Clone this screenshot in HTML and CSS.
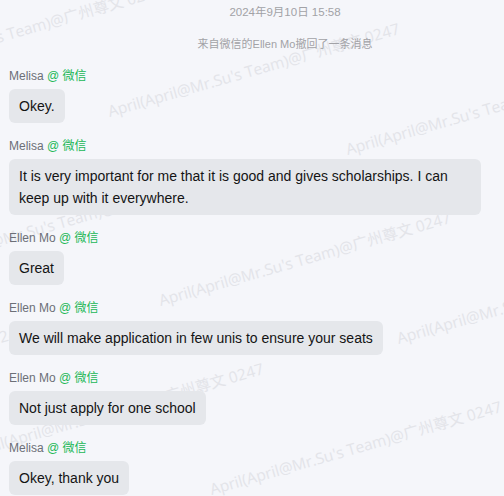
FILE: index.html
```html
<!DOCTYPE html>
<html lang="zh-CN">
<head>
<meta charset="utf-8">
<title>Chat</title>
<link rel="stylesheet" href="styles.css">
</head>
<body>
<div class="watermarks" aria-hidden="true">
  <span class="wm wm-a">April(April@Mr.Su's Team)@广州尊文 0247</span>
  <span class="wm wm-b">April(April@Mr.Su's Team)@广州尊文 0247</span>
  <span class="wm wm-c">April(April@Mr.Su's Team)@广州尊文 0247</span>
  <span class="wm wm-d">April(April@Mr.Su's Team)@广州尊文 0247</span>
  <span class="wm wm-e">April(April@Mr.Su's Team)@广州尊文 0247</span>
  <span class="wm wm-f">April(April@Mr.Su's Team)@广州尊文 0247</span>
  <span class="wm wm-g">April(April@Mr.Su's Team)@广州尊文 0247</span>
  <span class="wm wm-h">April(April@Mr.Su's Team)@广州尊文 0247</span>
  <span class="wm wm-i">April(April@Mr.Su's Team)@广州尊文 0247</span>
</div>
<main class="chat">
  <div class="sys time">2024年9月10日 15:58</div>
  <div class="sys notice">来自微信的Ellen Mo撤回了一条消息</div>
  <div class="msgs">
    <div class="msg">
      <div class="sender">Melisa <span class="via">@ 微信</span></div>
      <div class="bubble">Okey.</div>
    </div>
    <div class="msg">
      <div class="sender">Melisa <span class="via">@ 微信</span></div>
      <div class="bubble">It is very important for me that it is good and gives scholarships. I can keep up with it everywhere.</div>
    </div>
    <div class="msg">
      <div class="sender">Ellen Mo <span class="via">@ 微信</span></div>
      <div class="bubble">Great</div>
    </div>
    <div class="msg">
      <div class="sender">Ellen Mo <span class="via">@ 微信</span></div>
      <div class="bubble">We will make application in few unis to ensure your seats</div>
    </div>
    <div class="msg">
      <div class="sender">Ellen Mo <span class="via">@ 微信</span></div>
      <div class="bubble">Not just apply for one school</div>
    </div>
    <div class="msg">
      <div class="sender">Melisa <span class="via">@ 微信</span></div>
      <div class="bubble">Okey, thank you</div>
    </div>
  </div>
</main>
</body>
</html>
```
FILE: styles.css
```css
html, body {
  margin: 0;
  padding: 0;
  overflow: hidden;
}

body {
  position: relative;
  width: 504px;
  height: 496px;
  background: #f5f6fa;
  font-family: "Liberation Sans", "Noto Sans CJK SC", sans-serif;
  color: #1a1a1a;
}

/* watermark layer, beneath the conversation */
.watermarks {
  position: absolute;
  inset: 0;
  z-index: 0;
  pointer-events: none;
  overflow: hidden;
}

.wm {
  position: absolute;
  white-space: nowrap;
  font-family: "Open Sans", "Noto Sans CJK SC", sans-serif;
  font-size: 15.5px;
  line-height: 15.5px;
  color: #e3e4e9;
  transform-origin: 0 14px;
  transform: rotate(-16deg);
}

.wm-a { left: -128px; top: 66px; }
.wm-b { left: 110px;  top: 104px; }
.wm-c { left: 348px;  top: 142px; }
.wm-d { left: -77px;  top: 255px; }
.wm-e { left: 161px;  top: 293px; }
.wm-f { left: 399px;  top: 331px; }
.wm-g { left: -264px; top: 406px; }
.wm-h { left: -26px;  top: 444px; }
.wm-i { left: 212px;  top: 482px; }

.chat {
  position: relative;
  z-index: 1;
  padding-top: 4px;
}

.sys {
  padding-left: 66px;
  text-align: center;
  color: #a2a2a6;
  line-height: 16px;
}

.time {
  font-size: 11.5px;
}

.notice {
  font-size: 11px;
  margin-top: 16px;
}

.msgs {
  display: flex;
  flex-direction: column;
  gap: 15px;
  margin-top: 16px;
  padding: 0 9px;
}

.msg {
  display: flex;
  flex-direction: column;
  align-items: flex-start;
  gap: 5px;
}

.sender {
  font-size: 12px;
  line-height: 16px;
  color: #6c6f77;
}

.via {
  color: #22b857;
}

.bubble {
  box-sizing: border-box;
  max-width: 472px;
  padding: 6px 10px;
  border-radius: 6px;
  background: #e5e7eb;
  font-size: 14px;
  line-height: 22px;
  color: #141414;
}
```
